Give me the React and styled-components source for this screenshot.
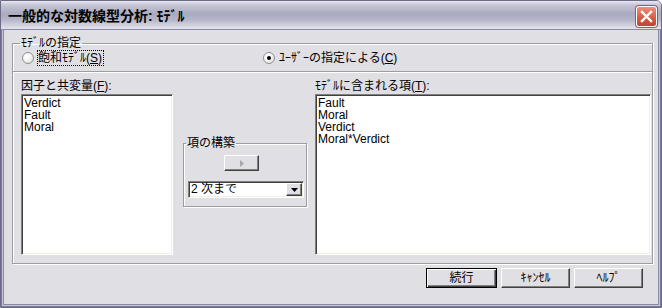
import React from 'react';
import styled, { createGlobalStyle } from 'styled-components';

const GlobalStyle = createGlobalStyle`
    html, body {
        margin: 0;
        padding: 0;
        background: #ffffff;
    }

    body {
        font-family: "Liberation Sans", "Noto Sans CJK JP", sans-serif;
        font-size: 12px;
        color: #000;
    }
`;

const Window = styled.div`
    width: 662px;
    height: 308px;
    box-sizing: border-box;
    display: flex;
    flex-direction: column;
    background: #e0dfe3;
    border: 1px solid #6b6b88;
    border-radius: 0 6px 0 0;
    overflow: hidden;
`;

const TitleBar = styled.div`
    height: 29px;
    flex: none;
    box-sizing: border-box;
    display: flex;
    align-items: center;
    justify-content: space-between;
    padding: 2px 4px 0 7px;
    border-bottom: 1px solid #8a8aa4;
    background: linear-gradient(180deg, #e8e8f0 0px, #c6c6d6 4px, #a9a9c0 13px, #b6b6ca 19px, #d0d0dc 24px, #e4e4ec 28px);
`;

const Title = styled.span`
    font-weight: bold;
    font-size: 14px;
    line-height: 16px;
    color: #000;
`;

const CloseButton = styled.div`
    width: 21px;
    height: 21px;
    box-sizing: border-box;
    border: 1px solid #fff;
    border-radius: 3px;
    background: linear-gradient(180deg, #e9917f 0%, #d45f48 55%, #c2442f 100%);
    box-shadow: 0 0 0 1px #9a5a5a;
    display: flex;
    align-items: center;
    justify-content: center;

    svg {
        display: block;
    }
`;

const Body = styled.div`
    flex: 1;
    display: flex;
    flex-direction: column;
    padding: 6px 8px 0 11px;
    box-shadow:
        inset 1px 0 #7b7b96, inset -1px 0 #7b7b96, inset 0 -1px #7b7b96,
        inset 2px 0 #c8c8d6, inset -2px 0 #c8c8d6, inset 0 -2px #c8c8d6,
        inset 3px 0 #8a8aa2, inset -3px 0 #8a8aa2, inset 0 -3px #8a8aa2;
`;

const GroupBox = styled.fieldset`
    margin: 0;
    min-width: 0;
    padding: ${p => p.$pad};
    border: 1px solid #9d9da1;
    box-shadow: inset 1px 1px #fff, 1px 1px #fff;
`;

const SpecGroup = styled(GroupBox)`
    border-bottom: none;
    box-shadow: inset 1px 1px #fff, 1px 0 #fff;
`;

const Caption = styled.legend`
    margin-left: -2px;
    padding: 0 1px;
    line-height: 14px;
    font-size: 12px;
`;

const RadioRow = styled.div`
    display: grid;
    grid-template-columns: 241px 1fr;
    height: 16px;
    align-items: center;
`;

const RadioOption = styled.label`
    display: flex;
    align-items: center;
    line-height: 14px;
`;

const RadioDot = styled.span`
    position: relative;
    width: 12px;
    height: 12px;
    box-sizing: border-box;
    border-radius: 50%;
    border: 1px solid #8e8e9a;
    background: radial-gradient(circle at 35% 35%, #ffffff 0%, #f4f4f0 45%, #d8d8d0 100%);

    &::after {
        content: '';
        display: ${p => (p.$checked ? 'block' : 'none')};
        position: absolute;
        left: 3px;
        top: 3px;
        width: 4px;
        height: 4px;
        border-radius: 50%;
        background: #000;
    }
`;

const RadioText = styled.span`
    margin-left: 4px;
    outline: ${p => (p.$focused ? '1px dotted #000' : 'none')};
    padding: 0 1px 0 0;
`;

const Key = styled.span`
    text-decoration: underline;
`;

const Panel = styled.div`
    display: grid;
    grid-template-columns: 152px 142px 1fr;
    grid-template-rows: 15px 161px;
    padding: 7px 1px 8px 8px;
    border: 1px solid #9d9da1;
    box-shadow: inset 1px 1px #fff, 1px 1px #fff;
`;

const FieldLabel = styled.div`
    line-height: 14px;
    white-space: nowrap;
`;

const ListBox = styled.div`
    box-sizing: border-box;
    height: 161px;
    grid-column: ${p => p.$col};
    background: #fff;
    border: 1px solid;
    border-color: #808080 #fff #fff #808080;
    box-shadow: inset 1px 1px #404040, inset -1px -1px #f1efe2;
    padding: 2px 2px 1px;
`;

const ListItem = styled.div`
    line-height: 12px;
    white-space: nowrap;
`;

const Middle = styled.div`
    grid-row: 2;
    grid-column: 2;
    align-self: start;
    margin: 42px 0 0 10px;
    width: 124px;
`;

const BuildBody = styled.div`
    display: flex;
    flex-direction: column;
`;

const ArrowButton = styled.div`
    width: 35px;
    height: 16px;
    margin: 5px 0 0 36px;
    box-sizing: border-box;
    border: 1px solid;
    border-color: #fff #404040 #404040 #fff;
    box-shadow: inset -1px -1px #808080;
    display: flex;
    align-items: center;
    justify-content: center;
`;

const Combo = styled.div`
    width: 116px;
    height: 17px;
    margin-top: 10px;
    box-sizing: border-box;
    display: flex;
    align-items: stretch;
    background: #fff;
    border: 1px solid;
    border-color: #808080 #fff #fff #808080;
    box-shadow: inset 1px 1px #404040, inset -1px -1px #f1efe2;
    padding: 1px;
`;

const ComboText = styled.span`
    flex: 1;
    line-height: 13px;
    padding-left: 1px;
`;

const ComboButton = styled.span`
    width: 16px;
    box-sizing: border-box;
    background: #e0dfe3;
    border: 1px solid;
    border-color: #fff #404040 #404040 #fff;
    box-shadow: inset -1px -1px #808080;
    display: flex;
    align-items: center;
    justify-content: center;
`;

const ButtonRow = styled.div`
    display: flex;
    justify-content: flex-end;
    gap: 4px;
    margin-top: 4px;
    padding-right: 10px;
`;

const DialogButton = styled.div`
    width: ${p => (p.$default ? 71 : 69)}px;
    height: 20px;
    box-sizing: border-box;
    display: flex;
    align-items: center;
    justify-content: center;
    line-height: 14px;
    border: 1px solid;
    border-color: ${p => (p.$default ? '#000' : '#fff #404040 #404040 #fff')};
    box-shadow: ${p => (p.$default
        ? 'inset 1px 1px #fff, inset -1px -1px #404040, inset -2px -2px #808080'
        : 'inset -1px -1px #808080')};
`;

function App() {
    return (
        <>
            <GlobalStyle />

            <Window>

                <TitleBar>
                    <Title>一般的な対数線型分析: ﾓﾃﾞﾙ</Title>
                    <CloseButton>
                        <svg width="13" height="13" viewBox="0 0 13 13">
                            <path d="M2 2 L11 11 M11 2 L2 11" stroke="#fff" strokeWidth="2.4" strokeLinecap="square" />
                        </svg>
                    </CloseButton>
                </TitleBar>

                <Body>

                    <SpecGroup $pad="0 8px 5px 9px">
                        <Caption>ﾓﾃﾞﾙの指定</Caption>
                        <RadioRow>
                            <RadioOption>
                                <RadioDot />
                                <RadioText $focused>飽和ﾓﾃﾞﾙ(<Key>S</Key>)</RadioText>
                            </RadioOption>
                            <RadioOption>
                                <RadioDot $checked />
                                <RadioText>ﾕｰｻﾞｰの指定による(<Key>C</Key>)</RadioText>
                            </RadioOption>
                        </RadioRow>
                    </SpecGroup>

                    <Panel>
                        <FieldLabel>因子と共変量(<Key>F</Key>):</FieldLabel>
                        <span />
                        <FieldLabel>ﾓﾃﾞﾙに含まれる項(<Key>T</Key>):</FieldLabel>

                        <ListBox $col={1}>
                            <ListItem>Verdict</ListItem>
                            <ListItem>Fault</ListItem>
                            <ListItem>Moral</ListItem>
                        </ListBox>

                        <Middle>
                            <GroupBox $pad="0 2px 8px 4px">
                                <Caption>項の構築</Caption>
                                <BuildBody>
                                    <ArrowButton>
                                        <svg width="4" height="7" viewBox="0 0 4 7">
                                            <polygon points="0,0 4,3.5 0,7" fill="#a7a6aa" />
                                        </svg>
                                    </ArrowButton>
                                    <Combo>
                                        <ComboText>2 次まで</ComboText>
                                        <ComboButton>
                                            <svg width="7" height="4" viewBox="0 0 7 4">
                                                <polygon points="0,0 7,0 3.5,4" fill="#000" />
                                            </svg>
                                        </ComboButton>
                                    </Combo>
                                </BuildBody>
                            </GroupBox>
                        </Middle>

                        <ListBox $col={3}>
                            <ListItem>Fault</ListItem>
                            <ListItem>Moral</ListItem>
                            <ListItem>Verdict</ListItem>
                            <ListItem>Moral*Verdict</ListItem>
                        </ListBox>
                    </Panel>

                    <ButtonRow>
                        <DialogButton $default>続行</DialogButton>
                        <DialogButton>ｷｬﾝｾﾙ</DialogButton>
                        <DialogButton>ﾍﾙﾌﾟ</DialogButton>
                    </ButtonRow>

                </Body>

            </Window>
        </>
    );
}

export default App;
